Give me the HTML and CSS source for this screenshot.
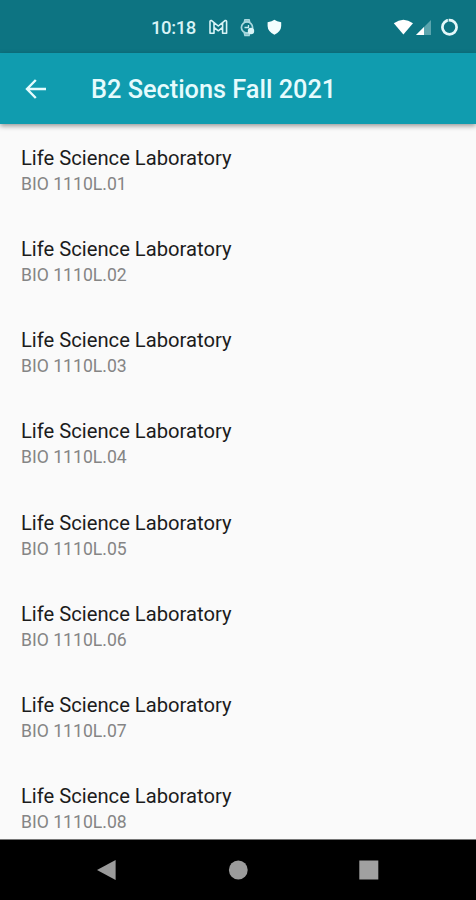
FILE: index.html
```
<!DOCTYPE html>
<html lang="en">
<head>
    <meta charset="UTF-8">
    <meta name="viewport" content="width=device-width, initial-scale=1.0">
    <title>B2 Sections Fall 2021</title>
    <link rel="stylesheet" href="styles.css">
</head>
<body>
    <div class="status-bar">
        <span class="clock">10:18</span>
        <!-- mail, watch, shield -->
        <svg class="notifications" width="74" height="20" viewBox="0 0 74 20">
            <path d="M2 3.6 Q2 2.2 3.6 2.6 L10.3 8 L17 2.6 Q18.6 2.2 18.6 3.6 V15.2 H14.6 V9.4 L10.3 12.8 L6 9.4 V15.2 H2 Z M6 4.5 V9.4 M14.6 4.5 V9.4" fill="none" stroke="#d8f3f6" stroke-width="1.6" stroke-linejoin="round"/>
            <path d="M36 4.5 L36.8 1.6 H41.2 L42 4.5 M36 14.5 L36.8 17.6 H41.2 L42 14.5" fill="#8fc6cd" stroke="#a9d8de" stroke-width="1.2"/>
            <circle cx="39" cy="9.5" r="5.6" fill="none" stroke="#a9d8de" stroke-width="1.7"/>
            <path d="M36.5 9.5 H40.5 V7" fill="none" stroke="#c7e9ed" stroke-width="1.3"/>
            <circle cx="43" cy="13" r="3.2" fill="#d8f3f6"/>
            <path d="M59.6 4.2 Q64.2 3.8 66.4 1.8 Q68.7 3.8 73.2 4.2 V8 Q73 13.5 66.4 16.8 Q59.8 13.5 59.6 8 Z" fill="#f4fefe"/>
        </svg>
        <!-- wifi, signal, sync ring -->
        <svg class="system-icons" width="66" height="20" viewBox="0 0 66 20">
            <path d="M0.8 5.3 Q10.4 -2 20 5.3 L10.4 16.6 Z" fill="#fff"/>
            <path d="M38 2 V17 H23 Z" fill="#5ba5ae"/>
            <path d="M31 9 V17 H23 Z" fill="#fff"/>
            <circle cx="56.5" cy="9.3" r="7.1" fill="none" stroke="#e4f8fa" stroke-width="2.7"/>
            <path d="M55.3 0.8 V4.6" stroke="#0d7482" stroke-width="0.8"/>
        </svg>
    </div>

    <header class="app-bar">
        <svg class="back" width="22" height="20" viewBox="0 0 22 20">
            <path d="M21 10 H2.5 M10.8 1 L2 10 L10.8 19" fill="none" stroke="#e6fbfd" stroke-width="2.4"/>
        </svg>
        <h1>B2 Sections Fall 2021</h1>
    </header>

    <main class="section-list">
        <div class="section">
            <p class="name">Life Science Laboratory</p>
            <p class="code">BIO 1110L.01</p>
        </div>
        <div class="section">
            <p class="name">Life Science Laboratory</p>
            <p class="code">BIO 1110L.02</p>
        </div>
        <div class="section">
            <p class="name">Life Science Laboratory</p>
            <p class="code">BIO 1110L.03</p>
        </div>
        <div class="section">
            <p class="name">Life Science Laboratory</p>
            <p class="code">BIO 1110L.04</p>
        </div>
        <div class="section">
            <p class="name">Life Science Laboratory</p>
            <p class="code">BIO 1110L.05</p>
        </div>
        <div class="section">
            <p class="name">Life Science Laboratory</p>
            <p class="code">BIO 1110L.06</p>
        </div>
        <div class="section">
            <p class="name">Life Science Laboratory</p>
            <p class="code">BIO 1110L.07</p>
        </div>
        <div class="section">
            <p class="name">Life Science Laboratory</p>
            <p class="code">BIO 1110L.08</p>
        </div>
    </main>

    <nav class="nav-bar">
        <svg width="20" height="22" viewBox="0 0 20 22"><path d="M0 11 L18.6 1 V21 Z" fill="#9b9b9b"/></svg>
        <svg width="20" height="20" viewBox="0 0 20 20"><circle cx="10.3" cy="10" r="9.4" fill="#9b9b9b"/></svg>
        <svg width="20" height="20" viewBox="0 0 20 20"><rect x="0.3" y="0.5" width="19" height="19" fill="#a0a0a0"/></svg>
    </nav>
</body>
</html>
```
FILE: styles.css
```
* {
    margin: 0;
    padding: 0;
    box-sizing: border-box;
}

body {
    display: flex;
    flex-direction: column;
    height: 900px;
    overflow: hidden;
    background-color: #fafafa;
    font-family: Roboto, sans-serif;
}

svg {
    display: block;
    flex: none;
}

.status-bar {
    display: flex;
    align-items: center;
    flex: none;
    height: 53px;
    padding: 2px 17px 0 151px;
    background-color: #0d7482;
}

.clock {
    width: 57px;
    color: #d8f3f6;
    font-size: 18.5px;
    font-weight: 500;
    letter-spacing: -0.4px;
    line-height: 22px;
}

.system-icons {
    margin-left: auto;
}

.app-bar {
    display: flex;
    align-items: center;
    flex: none;
    height: 71px;
    padding-left: 25px;
    background-color: #109caf;
    box-shadow: 0 2px 5px rgba(0, 0, 0, 0.4);
    z-index: 1;
}

.app-bar h1 {
    margin-left: 44px;
    padding-top: 2px;
    color: #e6fbfd;
    font-size: 25.3px;
    font-weight: 500;
    line-height: 30px;
    white-space: nowrap;
}

.section-list {
    flex: 1;
    min-height: 0;
    overflow: hidden;
    padding: 20px 21px 0;
}

.section {
    height: 91.15px;
}

.name {
    color: #1c1c1c;
    font-size: 20.2px;
    line-height: 28px;
}

.code {
    color: #858585;
    font-size: 17.6px;
    line-height: 24px;
}

.nav-bar {
    display: flex;
    align-items: center;
    justify-content: center;
    gap: 111px;
    flex: none;
    height: 61px;
    border-top: 1px solid #777;
    background-color: #000;
}
```
